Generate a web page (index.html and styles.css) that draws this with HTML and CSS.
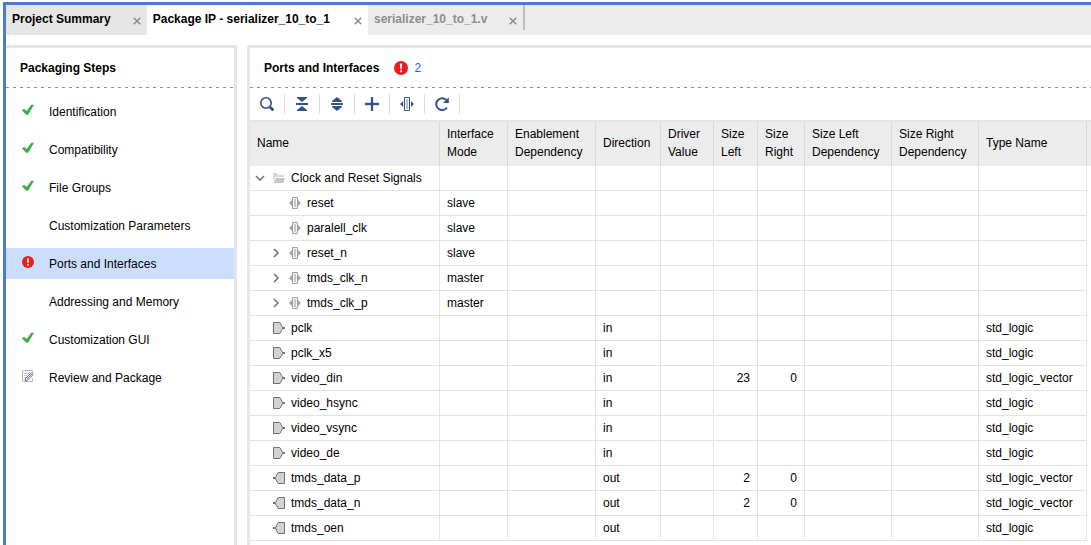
FILE: index.html
```html
<!DOCTYPE html>
<html lang="en">
<head>
<meta charset="utf-8">
<title>Package IP - serializer_10_to_1</title>
<link rel="stylesheet" href="styles.css">
</head>
<body>
<svg class="sprite" aria-hidden="true">
  <symbol id="check" viewBox="0 0 12 12"><path d="M0 6.500 2 4.700 4.600 7 9.300.8H12L6.200 10.800H4.200Z" fill="#3fae49"/></symbol>
  <symbol id="error" viewBox="0 0 14 14"><circle cx="7" cy="7" r="7" fill="#ee1c1c"/><path d="M5.900 2.600h2.200L7.700 8.200H6.300Z" fill="#fff"/><rect x="6" y="9.300" width="2" height="2" fill="#fff"/></symbol>
  <symbol id="review" viewBox="0 0 12 12"><path d="M10.500 2.500V.5H.5v11h10V8" fill="#f7f7f7" stroke="#b9b9b9"/><path d="M2 3.500h5M2 5.500h3M2 7.500h2" stroke="#ccc"/><path d="M3.500 8.500 9.600 2.600 11.400 4.300 5.300 10.300 3.200 10.800Z" fill="#fff" stroke="#5a6f9c"/><path d="M5 9 10 4" stroke="#5a6f9c" stroke-width=".7"/></symbol>
  <symbol id="close" viewBox="0 0 8 8"><path d="M.7.7l6.600 6.600M7.300.7.7 7.300" stroke="#8c8c8c" stroke-width="1.500"/></symbol>
  <symbol id="iface" viewBox="0 0 12 12"><path d="M3.500.5h5v11h-5z" fill="#f2f2f2" stroke="#a0a0a0"/><path d="M5 2h2v8H5z" fill="#c8c8c8"/><path d="M0 6 3 3v6ZM12 6 9 3v6Z" fill="#a0a0a0"/></symbol>
  <symbol id="port-in" viewBox="0 0 12 12"><path d="M.5.5h6.300L10 6l-3.200 5.500H.5Z" fill="#d2d2d2" stroke="#707070"/><path d="M10 5h2v2h-2z" fill="#707070"/></symbol>
  <symbol id="port-out" viewBox="0 0 12 12"><path d="M11.500.5H5.200L2 6l3.200 5.500h6.300Z" fill="#d2d2d2" stroke="#707070"/><path d="M0 5h2v2H0z" fill="#707070"/></symbol>
  <symbol id="folder" viewBox="0 0 12 12"><path d="M0 9V1h4l1 2h6v2H2L.5 9Z" fill="#d6d6d6"/><path d="M2.500 6H12l-1.500 5H.8Z" fill="#c6c6c6"/></symbol>
  <symbol id="down" viewBox="0 0 10 10"><path d="M1 3l4 4 4-4" fill="none" stroke="#757575" stroke-width="1.600"/></symbol>
  <symbol id="right" viewBox="0 0 10 10"><path d="M3 1l4 4-4 4" fill="none" stroke="#757575" stroke-width="1.600"/></symbol>
</svg>

<div class="window">
  <nav class="tabs" aria-label="Open editors">
    <div class="tab tab-first"><span>Project Summary</span><button class="close" aria-label="Close Project Summary"><svg><use href="#close"/></svg></button></div>
    <div class="tab tab-active"><span>Package IP - serializer_10_to_1</span><button class="close" aria-label="Close Package IP"><svg><use href="#close"/></svg></button></div>
    <div class="tab tab-dim"><span>serializer_10_to_1.v</span><button class="close" aria-label="Close serializer_10_to_1.v"><svg><use href="#close"/></svg></button></div>
  </nav>
  <div class="content">
    <aside class="steps">
      <h2 class="title">Packaging Steps</h2>
      <ul class="step-list">
        <li><button class="step"><svg><use href="#check"/></svg>Identification</button></li>
        <li><button class="step"><svg><use href="#check"/></svg>Compatibility</button></li>
        <li><button class="step"><svg><use href="#check"/></svg>File Groups</button></li>
        <li><button class="step"><svg></svg>Customization Parameters</button></li>
        <li><button class="step selected" aria-current="step"><svg><use href="#error"/></svg>Ports and Interfaces</button></li>
        <li><button class="step"><svg></svg>Addressing and Memory</button></li>
        <li><button class="step"><svg><use href="#check"/></svg>Customization GUI</button></li>
        <li><button class="step"><svg><use href="#review"/></svg>Review and Package</button></li>
      </ul>
    </aside>
    <main class="ports">
      <h2 class="title">Ports and Interfaces <svg class="alert"><use href="#error"/></svg><a class="count" href="#ports">2</a></h2>
      <div class="toolbar">
        <button class="tool" aria-label="Search"><svg viewBox="0 0 14 14"><circle cx="6" cy="6" r="5.200" fill="none" stroke="#34528c" stroke-width="1.600"/><path d="M10 10l3.500 3.500" stroke="#34528c" stroke-width="2.800"/></svg></button>
        <button class="tool" aria-label="Collapse all"><svg viewBox="0 0 14 14"><path d="M2 0h10v1L7 5 2 1ZM1 6h12v2H1ZM2 14h10v-1L7 9l-5 4Z" fill="#34528c"/></svg></button>
        <button class="tool" aria-label="Expand all"><svg viewBox="0 0 14 14"><path d="M7 0l5 4v1H2V4ZM1 6h12v2H1ZM2 9h10v1l-5 4-5-4Z" fill="#34528c"/></svg></button>
        <button class="tool" aria-label="Add"><svg viewBox="0 0 14 14"><path d="M6 0h2v6h6v2H8v6H6V8H0V6h6Z" fill="#34528c" stroke="#34528c" stroke-width=".4"/></svg></button>
        <button class="tool" aria-label="Interface"><svg viewBox="0 0 14 14"><path d="M4.500.5h5v13h-5z" fill="#fff" stroke="#34528c"/><path d="M6 2h2v10H6z" fill="#b4bfd6"/><path d="M0 7l3-3v6ZM14 7l-3-3v6Z" fill="#34528c"/></svg></button>
        <button class="tool" aria-label="Refresh"><svg viewBox="0 0 14 14"><path d="M12 10.500A5.900 5.900 0 1 1 11.300 3" fill="none" stroke="#34528c" stroke-width="2"/><path d="M13.800.3V6H8Z" fill="#34528c"/></svg></button>
      </div>
      <table class="grid" id="ports">
        <colgroup><col class="c-name"><col class="c-mode"><col class="c-enable"><col class="c-dir"><col class="c-driver"><col class="c-left"><col class="c-right"><col class="c-dep"><col class="c-dep"><col class="c-type"><col></colgroup>
        <thead><tr><th>Name</th><th>Interface Mode</th><th>Enablement Dependency</th><th>Direction</th><th>Driver Value</th><th>Size Left</th><th>Size Right</th><th>Size Left Dependency</th><th>Size Right Dependency</th><th>Type Name</th><th></th></tr></thead>
        <tbody>
          <tr><td><div class="name root"><svg class="arrow"><use href="#down"/></svg><svg><use href="#folder"/></svg>Clock and Reset Signals</div></td><td></td><td></td><td></td><td></td><td></td><td></td><td></td><td></td><td></td><td></td></tr>
          <tr><td><div class="name child"><svg class="arrow"></svg><svg><use href="#iface"/></svg>reset</div></td><td>slave</td><td></td><td></td><td></td><td></td><td></td><td></td><td></td><td></td><td></td></tr>
          <tr><td><div class="name child"><svg class="arrow"></svg><svg><use href="#iface"/></svg>paralell_clk</div></td><td>slave</td><td></td><td></td><td></td><td></td><td></td><td></td><td></td><td></td><td></td></tr>
          <tr><td><div class="name child"><svg class="arrow"><use href="#right"/></svg><svg><use href="#iface"/></svg>reset_n</div></td><td>slave</td><td></td><td></td><td></td><td></td><td></td><td></td><td></td><td></td><td></td></tr>
          <tr><td><div class="name child"><svg class="arrow"><use href="#right"/></svg><svg><use href="#iface"/></svg>tmds_clk_n</div></td><td>master</td><td></td><td></td><td></td><td></td><td></td><td></td><td></td><td></td><td></td></tr>
          <tr><td><div class="name child"><svg class="arrow"><use href="#right"/></svg><svg><use href="#iface"/></svg>tmds_clk_p</div></td><td>master</td><td></td><td></td><td></td><td></td><td></td><td></td><td></td><td></td><td></td></tr>
          <tr><td><div class="name port"><svg><use href="#port-in"/></svg>pclk</div></td><td></td><td></td><td>in</td><td></td><td></td><td></td><td></td><td></td><td>std_logic</td><td></td></tr>
          <tr><td><div class="name port"><svg><use href="#port-in"/></svg>pclk_x5</div></td><td></td><td></td><td>in</td><td></td><td></td><td></td><td></td><td></td><td>std_logic</td><td></td></tr>
          <tr><td><div class="name port"><svg><use href="#port-in"/></svg>video_din</div></td><td></td><td></td><td>in</td><td></td><td class="num">23</td><td class="num">0</td><td></td><td></td><td>std_logic_vector</td><td></td></tr>
          <tr><td><div class="name port"><svg><use href="#port-in"/></svg>video_hsync</div></td><td></td><td></td><td>in</td><td></td><td></td><td></td><td></td><td></td><td>std_logic</td><td></td></tr>
          <tr><td><div class="name port"><svg><use href="#port-in"/></svg>video_vsync</div></td><td></td><td></td><td>in</td><td></td><td></td><td></td><td></td><td></td><td>std_logic</td><td></td></tr>
          <tr><td><div class="name port"><svg><use href="#port-in"/></svg>video_de</div></td><td></td><td></td><td>in</td><td></td><td></td><td></td><td></td><td></td><td>std_logic</td><td></td></tr>
          <tr><td><div class="name port"><svg><use href="#port-out"/></svg>tmds_data_p</div></td><td></td><td></td><td>out</td><td></td><td class="num">2</td><td class="num">0</td><td></td><td></td><td>std_logic_vector</td><td></td></tr>
          <tr><td><div class="name port"><svg><use href="#port-out"/></svg>tmds_data_n</div></td><td></td><td></td><td>out</td><td></td><td class="num">2</td><td class="num">0</td><td></td><td></td><td>std_logic_vector</td><td></td></tr>
          <tr><td><div class="name port"><svg><use href="#port-out"/></svg>tmds_oen</div></td><td></td><td></td><td>out</td><td></td><td></td><td></td><td></td><td></td><td>std_logic</td><td></td></tr>
        </tbody>
      </table>
    </main>
  </div>
</div>
</body>
</html>
```
FILE: styles.css
```css
* { box-sizing: border-box; }
body {
  margin: 0;
  padding: 2px 0 0 3px;
  background: #fff;
  color: #000;
  font: 12px/18px "Liberation Sans", Arial, sans-serif;
}
button { font: inherit; color: inherit; background: none; border: 0; padding: 0; margin: 0; }
svg { display: block; flex: none; width: 12px; height: 12px; }
.sprite { display: none; }

.window {
  display: flex;
  flex-direction: column;
  min-height: calc(100vh - 2px);
  border: solid #4a7dcf;
  border-width: 3px 0 0 3px;
}

.tabs { display: flex; height: 30px; background: #ececec; font-weight: bold; }
.tab { display: flex; justify-content: space-between; gap: 22px; padding: 5px 6px 0; }
.tab-first { background: #e6e6e6; }
.tab-active { gap: 24px; background: #fff; }
.tab-dim {
  height: 25px;
  color: #8e8e8e;
  border-right: 2px solid #bdbdbd;
}
.close { align-self: flex-start; padding-top: 7px; }
.close svg { width: 8px; height: 8px; }

.content { display: flex; flex: 1; gap: 10px; padding-top: 10px; }
.steps { flex: none; width: 231px; border: solid #e6e6e6; border-width: 3px 3px 0 0; }
.ports { flex: 1; min-width: 0; border: solid #e6e6e6; border-width: 3px 0 0 3px; }

.title {
  display: flex;
  align-items: center;
  margin: 0;
  height: 40px;
  padding: 0 14px;
  font-size: 12px;
  background: repeating-linear-gradient(90deg, #8c8c8c 0 3px, transparent 3px 7px) bottom / 100% 1px no-repeat;
}
.alert { width: 14px; height: 14px; margin: 0 6px 0 15px; }
.count { color: #1f5cf0; font-weight: normal; text-decoration: none; }

.step-list { list-style: none; margin: 0; padding: 8px 0 0; }
.step-list li { padding-bottom: 7px; }
.step {
  display: flex;
  align-items: center;
  gap: 15px;
  width: 100%;
  height: 31px;
  padding: 0 16px;
  text-align: left;
}
.step svg { margin-bottom: 3px; }
.selected { background: #ccdeff; }

.toolbar { display: flex; align-items: center; height: 32px; }
.tool { display: grid; place-items: center; width: 35px; height: 20px; border-right: 1px solid #dadada; }
.tool svg { width: 14px; height: 14px; }

.grid { width: 100%; table-layout: fixed; border-collapse: separate; border-spacing: 0; border-top: 2px solid #e4e4e4; }
.c-name { width: 190px; }
.c-mode { width: 68px; }
.c-enable { width: 88px; }
.c-dir { width: 65px; }
.c-driver { width: 53px; }
.c-left { width: 44px; }
.c-right { width: 47px; }
.c-dep { width: 87px; }
.c-type { width: 108px; }
.grid th {
  height: 44px;
  padding: 0 7px 2px;
  border-right: 1px solid #dadada;
  background: #ececec;
  font-weight: normal;
  text-align: left;
}
.grid td {
  height: 25px;
  padding: 0 7px;
  border: solid #e2e2e2;
  border-width: 0 1px 1px 0;
  white-space: nowrap;
}
.grid th:last-child, .grid td:last-child { padding: 0; border: 0; }
.grid .num { text-align: right; }
.name { display: flex; align-items: center; gap: 6px; }
.name .arrow { width: 10px; height: 10px; }
.root { margin-left: -2px; }
.root .arrow { margin-right: 2px; }
.child { padding-left: 14px; }
.child .arrow { margin-right: 2px; }
.port { padding-left: 16px; }
```
